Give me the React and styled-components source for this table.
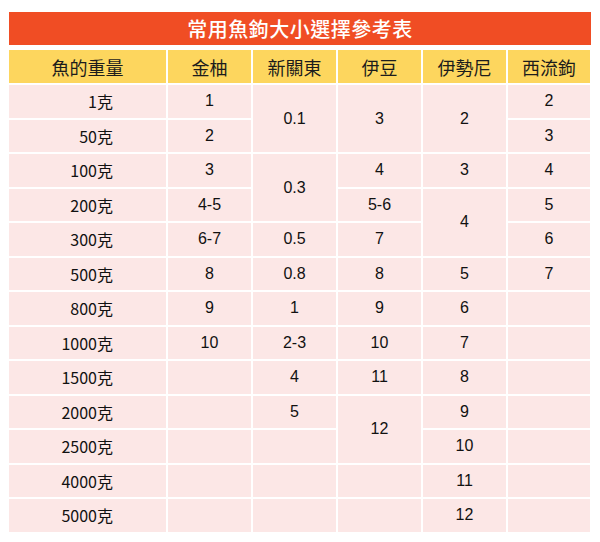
import React from 'react'
import styled, { createGlobalStyle } from 'styled-components'

const GlobalStyle = createGlobalStyle`
  body {
    margin: 0;
    background: #ffffff;
    font-family: "Noto Sans CJK TC", "Noto Sans", sans-serif;
  }
`

const weights = ['1克', '50克', '100克', '200克', '300克', '500克', '800克', '1000克', '1500克', '2000克', '2500克', '4000克', '5000克']

// each hook column: [value, rowSpan]
const hookColumns = [
  {
    name: '金柚',
    cells: [['1', 1], ['2', 1], ['3', 1], ['4-5', 1], ['6-7', 1], ['8', 1], ['9', 1], ['10', 1], ['', 1], ['', 1], ['', 1], ['', 1], ['', 1]],
  },
  {
    name: '新關東',
    cells: [['0.1', 2], ['0.3', 2], ['0.5', 1], ['0.8', 1], ['1', 1], ['2-3', 1], ['4', 1], ['5', 1], ['', 1], ['', 1], ['', 1]],
  },
  {
    name: '伊豆',
    cells: [['3', 2], ['4', 1], ['5-6', 1], ['7', 1], ['8', 1], ['9', 1], ['10', 1], ['11', 1], ['12', 2], ['', 1], ['', 1]],
  },
  {
    name: '伊勢尼',
    cells: [['2', 2], ['3', 1], ['4', 2], ['5', 1], ['6', 1], ['7', 1], ['8', 1], ['9', 1], ['10', 1], ['11', 1], ['12', 1]],
  },
  {
    name: '西流鉤',
    cells: [['2', 1], ['3', 1], ['4', 1], ['5', 1], ['6', 1], ['7', 1], ['', 1], ['', 1], ['', 1], ['', 1], ['', 1], ['', 1], ['', 1]],
  },
]

const App = () => {
  const hookCells = []
  hookColumns.forEach((col, ci) => {
    let row = 2
    col.cells.forEach(([v, span], i) => {
      hookCells.push(
        <Cell key={`${ci}-${i}`} $col={ci + 2} $row={row} $span={span}>
          {v}
        </Cell>
      )
      row += span
    })
  })

  return (
    <>
      <GlobalStyle />
      <Page>
        <TitleBar>常用魚鉤大小選擇參考表</TitleBar>
        <Grid>
          <HeadCell $col={1}>魚的重量</HeadCell>
          {hookColumns.map((c, i) => (
            <HeadCell key={c.name} $col={i + 2}>{c.name}</HeadCell>
          ))}
          {weights.map((w, i) => (
            <WeightCell key={w} $row={i + 2}>{w}</WeightCell>
          ))}
          {hookCells}
        </Grid>
      </Page>
    </>
  )
}

const Page = styled.div`
  padding: 12px 9px 0 9px;
  width: 582px;
`

const TitleBar = styled.div`
  height: 33px;
  background: #f04d24;
  color: #ffffff;
  font-size: 20px;
  font-weight: 500;
  display: flex;
  align-items: center;
  justify-content: center;
  letter-spacing: 0.5px;
  margin-bottom: 5px;
`

const Grid = styled.div`
  display: grid;
  grid-template-columns: 157px repeat(4, 83px) 82px;
  grid-template-rows: 33px repeat(13, 32.5px);
  column-gap: 2px;
  row-gap: 2px;
`

const HeadCell = styled.div`
  grid-column: ${(p) => p.$col};
  grid-row: 1;
  background: #fdd65e;
  color: #1c1c1c;
  font-size: 18px;
  display: flex;
  align-items: center;
  justify-content: center;
`

const WeightCell = styled.div`
  grid-column: 1;
  grid-row: ${(p) => p.$row};
  background: #fce7e6;
  color: #111111;
  font-size: 16px;
  display: flex;
  align-items: center;
  justify-content: flex-end;
  padding-right: 53px;
`

const Cell = styled.div`
  grid-column: ${(p) => p.$col};
  grid-row: ${(p) => p.$row} / span ${(p) => p.$span};
  background: #fce7e6;
  color: #111111;
  font-family: "Liberation Sans", Arial, sans-serif;
  font-size: 16px;
  display: flex;
  align-items: center;
  justify-content: center;
`

export default App
